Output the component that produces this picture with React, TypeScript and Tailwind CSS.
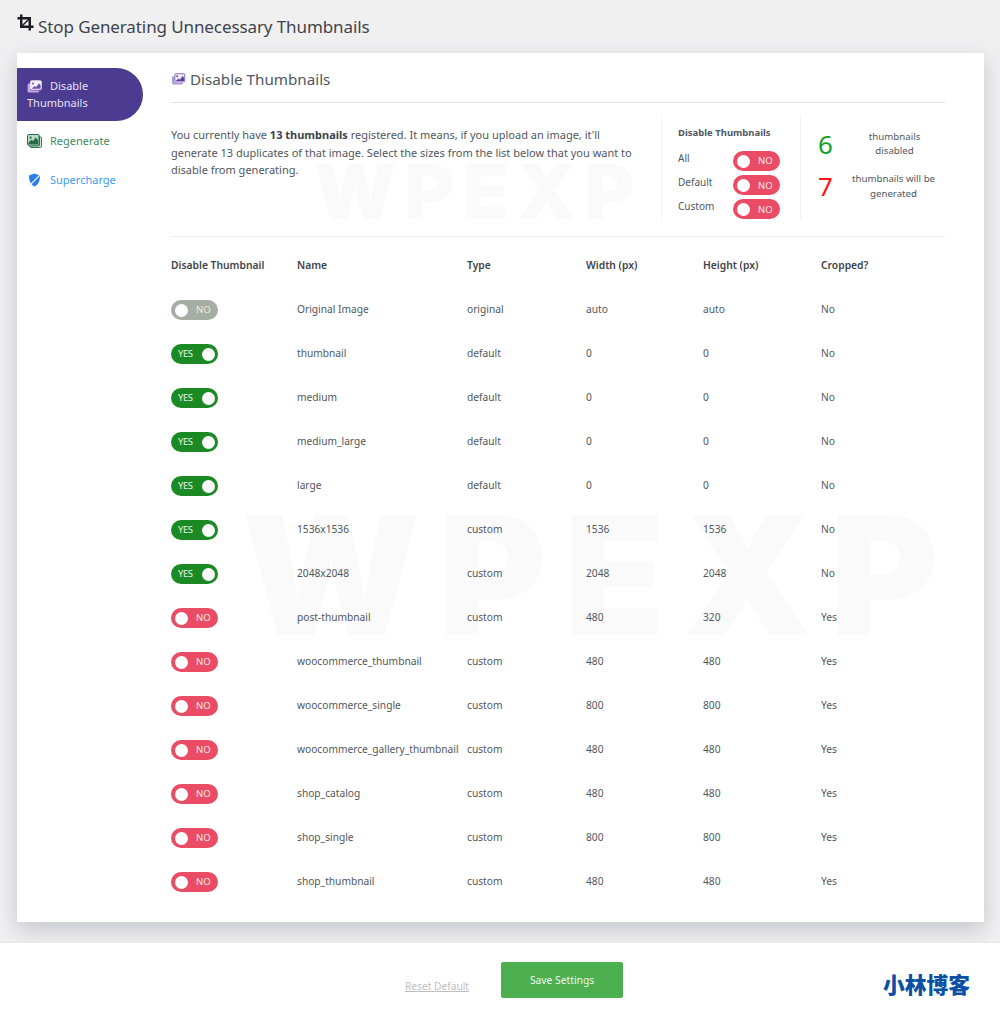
import React from "react";

const font = "font-['Noto_Sans',sans-serif]";

function Toggle({ state }: { state: "no" | "yes" | "off" }) {
  if (state === "yes") {
    return (
      <div className="flex h-[20px] w-[47px] items-center justify-between rounded-full bg-[#1b8a25] pl-[7px] pr-[3px]">
        <span className="text-[9.5px] leading-none tracking-[-0.4px] text-[#e6f3e6]">YES</span>
        <span className="h-[13px] w-[13px] rounded-full bg-white" />
      </div>
    );
  }
  return (
    <div className={`flex h-[20px] w-[47px] items-center rounded-full pl-[4px] ${state === "no" ? "bg-[#ea4c66]" : "bg-[#a6aea3]"}`}>
      <span className="h-[13px] w-[13px] rounded-full bg-white" />
      <span className={`ml-[8px] text-[9.5px] leading-none ${state === "no" ? "text-[#fde8ec]" : "text-[#e8ebe7]"}`}>NO</span>
    </div>
  );
}

function StackIcon({ back, frame, fill, mark, className }: { back: string; frame: string; fill: string; mark: string; className?: string }) {
  return (
    <svg viewBox="0 0 15 13" className={className}>
      <path d="M3 3.5 H1.8 a1.2 1.2 0 0 0-1.2 1.2 V9 L0.6 11.2 a1.2 1.2 0 0 0 1.2 1.2 H11 a1.2 1.2 0 0 0 1.2-1.2 V10.5 H4 a1 1 0 0 1-1-1 z" fill={back} />
      <rect x="3.5" y="0.8" width="10.8" height="8.8" rx="0.9" fill={fill} stroke={frame} strokeWidth="1" />
      <circle cx="6" cy="3.4" r="1" fill={mark} />
      <path d="M4.6 8.8 L7.6 6 L9 7.2 L12 3.2 L13.6 5.4 V8.8 z" fill={mark} />
    </svg>
  );
}

function RegenIcon({ className }: { className?: string }) {
  return (
    <svg viewBox="0 0 15 14" className={className}>
      <rect x="3" y="3" width="11.5" height="10.5" rx="1" fill="#cfe5d6" stroke="#2f7d55" strokeWidth="1" />
      <rect x="1.5" y="1.5" width="11" height="10.5" rx="1" fill="#e4f0e6" stroke="#2f7d55" strokeWidth="1" />
      <rect x="0.5" y="0.5" width="11.5" height="10.5" rx="1" fill="#bcdccb" stroke="#256b45" strokeWidth="1" />
      <circle cx="3.6" cy="3.6" r="1.1" fill="#256b45" />
      <path d="M1.5 10 V8.4 L4.4 5.8 L6 7 L8.6 3.4 L11 6 V10 z" fill="#256b45" />
    </svg>
  );
}

const rows: [string, string, string, string, string, "no" | "yes" | "off"][] = [
  ["Original Image", "original", "auto", "auto", "No", "off"],
  ["thumbnail", "default", "0", "0", "No", "yes"],
  ["medium", "default", "0", "0", "No", "yes"],
  ["medium_large", "default", "0", "0", "No", "yes"],
  ["large", "default", "0", "0", "No", "yes"],
  ["1536x1536", "custom", "1536", "1536", "No", "yes"],
  ["2048x2048", "custom", "2048", "2048", "No", "yes"],
  ["post-thumbnail", "custom", "480", "320", "Yes", "no"],
  ["woocommerce_thumbnail", "custom", "480", "480", "Yes", "no"],
  ["woocommerce_single", "custom", "800", "800", "Yes", "no"],
  ["woocommerce_gallery_thumbnail", "custom", "480", "480", "Yes", "no"],
  ["shop_catalog", "custom", "480", "480", "Yes", "no"],
  ["shop_single", "custom", "800", "800", "Yes", "no"],
  ["shop_thumbnail", "custom", "480", "480", "Yes", "no"],
];

const gridCols = "grid grid-cols-[126px_170px_119px_117px_118px_1fr] items-center";

export default function App() {
  return (
    <div className={`${font} relative h-[1024px] w-[1000px] overflow-hidden bg-[#f0f0f1] text-[#50575e]`}>
      <div className="flex h-[53px] items-start pl-[17px] pt-[13px]">
        <svg viewBox="0 0 18 18" className="mt-[1px] h-[17px] w-[17px]" fill="none" stroke="#1d1d1f" strokeWidth="2.6">
          <path d="M4.5 0.5 V13.5 H17.5" />
          <path d="M0.5 4.5 H13.5 V17.5" />
          <path d="M4 14 L14 4" strokeWidth="1.5" />
        </svg>
        <h1 className="ml-[4px] text-[17px] leading-[27px] tracking-[-0.1px] text-[#3f444b]">Stop Generating Unnecessary Thumbnails</h1>
      </div>

      <div className="ml-[17px] flex h-[869px] w-[967px] bg-white shadow-[0_8px_20px_rgba(90,90,120,0.28)]">
        <nav className="w-[126px] shrink-0 pt-[15px] text-[11px]">
          <div className="h-[53px] rounded-r-[27px] bg-[#4b3b91] pl-[10px] pt-[10px] leading-[16px] text-[#e5e1f3]">
            <StackIcon back="#c9a6ee" frame="#e6d7f8" fill="#f7f2fd" mark="#6a4fa8" className="mb-[2px] mr-[8px] inline-block h-[13px] w-[15px]" />
            Disable
            <br />
            Thumbnails
          </div>
          <div className="mt-[11px] flex h-[18px] items-center pl-[10px] text-[#3f8a5c]">
            <RegenIcon className="mr-[8px] h-[14px] w-[15px]" />
            Regenerate
          </div>
          <div className="mt-[21px] flex h-[18px] items-center pl-[10px] text-[#3b9cf5]">
            <svg viewBox="0 0 14 14" className="mr-[8px] h-[14px] w-[15px]">
              <path d="M7 0.5 L12.5 2.5 C12.5 8 11 11.5 7 13.5 C3 11.5 1.5 8 1.5 2.5 Z" fill="#2b7de9" />
              <path d="M1 13.5 L12.5 2" stroke="#e8f1fd" strokeWidth="1.1" />
            </svg>
            Supercharge
          </div>
        </nav>

        <main className="relative ml-[28px] w-[774px]">
          <div aria-hidden="true" className="absolute left-[71px] top-[440px] font-['Inter',sans-serif] text-[165px] font-black leading-none tracking-[17.5px] text-[#fafafa]">WPEXP</div>
          <div aria-hidden="true" className="absolute left-[143px] top-[100px] font-['Inter',sans-serif] text-[76px] font-black leading-none tracking-[8px] text-[#fafafa]">WPEXP</div>

          <div className="relative">
            <div className="flex h-[50px] items-start border-b border-[#e3e3e3] pt-[14px]">
              <StackIcon back="#a993d8" frame="#7d63b8" fill="#f3eefa" mark="#5a3f9a" className="mr-[4px] mt-[6px] h-[12px] w-[15px]" />
              <h2 className="text-[15.2px] leading-[24px] text-[#50575e]">Disable Thumbnails</h2>
            </div>

            <div className="flex h-[134px] border-b border-[#f0f0f0] pb-[16px] pt-[12px]">
              <p className="w-[490px] pr-[12px] pt-[11px] text-[11px] leading-[17.5px]">
                You currently have <b className="font-bold text-[#3c434a]">13 thumbnails</b> registered. It means, if you upload an image, it'll generate 13 duplicates of that image. Select the sizes from the list below that you want to disable from generating.
              </p>
              <div className="w-[140px] border-l border-r border-[#f3f3f3] pl-[16px] pr-[20px]">
                <div className="pb-[9px] pt-[11px] text-[9.5px] font-bold leading-[14px] text-[#50575e]">Disable Thumbnails</div>
                {["All", "Default", "Custom"].map((l) => (
                  <div key={l} className="flex h-[24.2px] items-center justify-between text-[10px]">
                    <span className="mb-[5px]">{l}</span>
                    <Toggle state="no" />
                  </div>
                ))}
              </div>
              <div className="flex-1 text-[9.7px] leading-[14px]">
                <div className="flex h-[42px] items-center pl-[17px] pt-[15px]">
                  <span className="w-[26px] text-[26px] leading-none text-[#14a02c]">6</span>
                  <span className="flex-1 text-center">thumbnails<br />disabled</span>
                </div>
                <div className="mt-[1px] flex h-[42px] items-center pl-[17px] pt-[14px]">
                  <span className="w-[26px] text-[26px] leading-none text-[#ff1414]">7</span>
                  <span className="flex-1 pr-[2px] text-center leading-[15px]">thumbnails will be<br />generated</span>
                </div>
              </div>
            </div>

            <div className={`${gridCols} h-[44px] pt-[14px] text-[10.3px] font-semibold text-[#3f444b]`}>
              <span>Disable Thumbnail</span>
              <span>Name</span>
              <span>Type</span>
              <span>Width (px)</span>
              <span>Height (px)</span>
              <span>Cropped?</span>
            </div>
            <div className="pt-[7px]">
              {rows.map((r) => (
                <div key={r[0]} className={`${gridCols} h-[44px] text-[10.2px]`}>
                  <Toggle state={r[5]} />
                  <span className="whitespace-nowrap">{r[0]}</span>
                  <span>{r[1]}</span>
                  <span>{r[2]}</span>
                  <span>{r[3]}</span>
                  <span>{r[4]}</span>
                </div>
              ))}
            </div>
          </div>
        </main>
      </div>

      <footer className="relative mt-[20px] flex h-[82px] border-t border-[#e6e6e6] bg-white">
        <a className="ml-[405px] mt-[35px] text-[10.2px] leading-[16px] text-[#bdbdbd] underline">Reset Default</a>
        <button className="ml-[32px] mt-[19px] h-[36px] w-[122px] rounded-[2px] bg-[#4caf50] pt-[1px] text-[10.3px] text-[#eef8ee]">Save Settings</button>
        <span className="ml-[260px] mt-[27px] font-['Noto_Sans_CJK_SC',sans-serif] text-[21.75px] font-black leading-[28px] text-[#0b50a5]">小林博客</span>
      </footer>
    </div>
  );
}
